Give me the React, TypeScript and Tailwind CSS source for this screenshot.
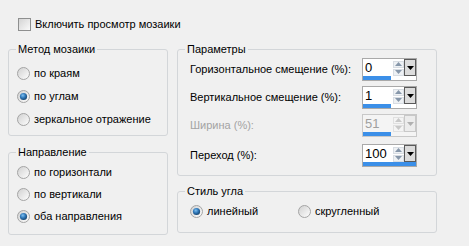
import React from "react";

function Radio({ checked }: { checked?: boolean }) {
  return (
    <svg width="13" height="13" viewBox="0 0 13 13" className="shrink-0">
      <defs>
        <linearGradient id="rgr" x1="0" y1="0" x2="1" y2="1">
          <stop offset="0" stopColor="#cfcfcf" />
          <stop offset="1" stopColor="#ffffff" />
        </linearGradient>
        <radialGradient id="rgb" cx="0.4" cy="0.35" r="0.7">
          <stop offset="0" stopColor="#7fc0f0" />
          <stop offset="0.5" stopColor="#2f77b8" />
          <stop offset="1" stopColor="#153f66" />
        </radialGradient>
      </defs>
      <circle cx="6.5" cy="6.5" r="6" fill="url(#rgr)" stroke="#a4a4a4" strokeWidth="1" />
      {checked && <circle cx="6.5" cy="6.5" r="3.6" fill="url(#rgb)" />}
    </svg>
  );
}

function RadioRow({ checked, label }: { checked?: boolean; label: string }) {
  return (
    <div className="flex items-center gap-[4px] h-[13px]">
      <Radio checked={checked} />
      <span className="leading-[13px]">{label}</span>
    </div>
  );
}

function Spin({ value, full, disabled }: { value: string; full?: boolean; disabled?: boolean }) {
  return (
    <div className={"w-[55px] h-[23px] border flex flex-col " + (disabled ? "border-[#c8c8c8] bg-[#f4f4f4]" : "border-[#a9a9a9] bg-white")}>
      <div className="flex h-[17px]">
        <div className={"w-[30px] pl-[2px] text-[13px] leading-[17px] " + (disabled ? "text-[#a0a0a0]" : "text-black")}>{value}</div>
        <div className="w-[11px] flex flex-col justify-center gap-[1px] mt-[1px]">
          <div className={"h-[7px] flex items-center justify-center border " + (disabled ? "border-[#e0e0e0]" : "border-[#d8dde3] bg-[#eef1f4]")}>
            <svg width="7" height="4" viewBox="0 0 7 4"><path d="M0 4 L3.5 0 L7 4 Z" fill={disabled ? "#c8c8c8" : "#8797aa"} /></svg>
          </div>
          <div className={"h-[7px] flex items-center justify-center border " + (disabled ? "border-[#e0e0e0]" : "border-[#d8dde3] bg-[#eef1f4]")}>
            <svg width="7" height="4" viewBox="0 0 7 4"><path d="M0 0 L3.5 4 L7 0 Z" fill={disabled ? "#c8c8c8" : "#8797aa"} /></svg>
          </div>
        </div>
        <div className={"w-[12px] h-[17px] border flex items-center justify-center " + (disabled ? "border-[#c8c8c8] bg-[#ececec]" : "border-[#5a5a5a] bg-[#dcdcdc]")}>
          <svg width="7" height="4" viewBox="0 0 7 4"><path d="M0 0 L3.5 4 L7 0 Z" fill={disabled ? "#b0b0b0" : "#000"} /></svg>
        </div>
      </div>
      <div className="flex-1 flex items-end">
        <div className={"h-[4px] bg-[#3b8fe8] " + (full ? "w-full" : "w-[28px]")} />
      </div>
    </div>
  );
}

function Group({ title, className, children }: { title: string; className?: string; children: React.ReactNode }) {
  return (
    <fieldset className={"border border-[#d3d6d9] rounded-[3px] " + (className ?? "")}>
      <legend className="ml-[7px] px-[2px] leading-[13px]">{title}</legend>
      {children}
    </fieldset>
  );
}

export default function App() {
  return (
    <div className="w-[469px] h-[246px] bg-[#f0f0f0] text-black text-[11px] font-['Liberation_Sans',Arial,sans-serif] overflow-hidden">
      <div className="flex items-center pt-[18px] pl-[18px] h-[31px]">
        <div className="w-[13px] h-[13px] border border-[#8e8f8f] bg-gradient-to-br from-[#d4d4d4] to-[#fafafa]" />
        <span className="ml-[4px] leading-[13px]">Включить просмотр мозаики</span>
      </div>
      <div className="flex pl-[8px] mt-[12px] gap-[9px]">
        <div className="w-[160px] flex flex-col gap-[10px]">
          <Group title="Метод мозаики" className="h-[93px]">
            <div className="flex flex-col gap-[10px] pl-[8px] pt-[11px]">
              <RadioRow label="по краям" />
              <RadioRow label="по углам" checked />
              <RadioRow label="зеркальное отражение" />
            </div>
          </Group>
          <Group title="Направление" className="h-[89px]">
            <div className="flex flex-col gap-[9px] pl-[8px] pt-[7px]">
              <RadioRow label="по горизонтали" />
              <RadioRow label="по вертикали" />
              <RadioRow label="оба направления" checked />
            </div>
          </Group>
        </div>
        <div className="w-[260px] flex flex-col gap-[9px]">
          <Group title="Параметры" className="h-[133px]">
            <div className="flex flex-col gap-[5px] pl-[12px] pr-[19px] pt-[2px]">
              <div className="flex items-center justify-between">
                <span>Горизонтальное смещение (%):</span>
                <Spin value="0" />
              </div>
              <div className="flex items-center justify-between">
                <span>Вертикальное смещение (%):</span>
                <Spin value="1" />
              </div>
              <div className="flex items-center justify-between">
                <span className="text-[#a3a3a3]">Ширина (%):</span>
                <Spin value="51" disabled />
              </div>
              <div className="flex items-center justify-between mt-[2px]">
                <span>Переход (%):</span>
                <Spin value="100" full />
              </div>
            </div>
          </Group>
          <Group title="Стиль угла" className="h-[48px]">
            <div className="flex pl-[12px] pt-[7px]">
              <div className="w-[108px]"><RadioRow label="линейный" checked /></div>
              <RadioRow label="скругленный" />
            </div>
          </Group>
        </div>
      </div>
    </div>
  );
}
